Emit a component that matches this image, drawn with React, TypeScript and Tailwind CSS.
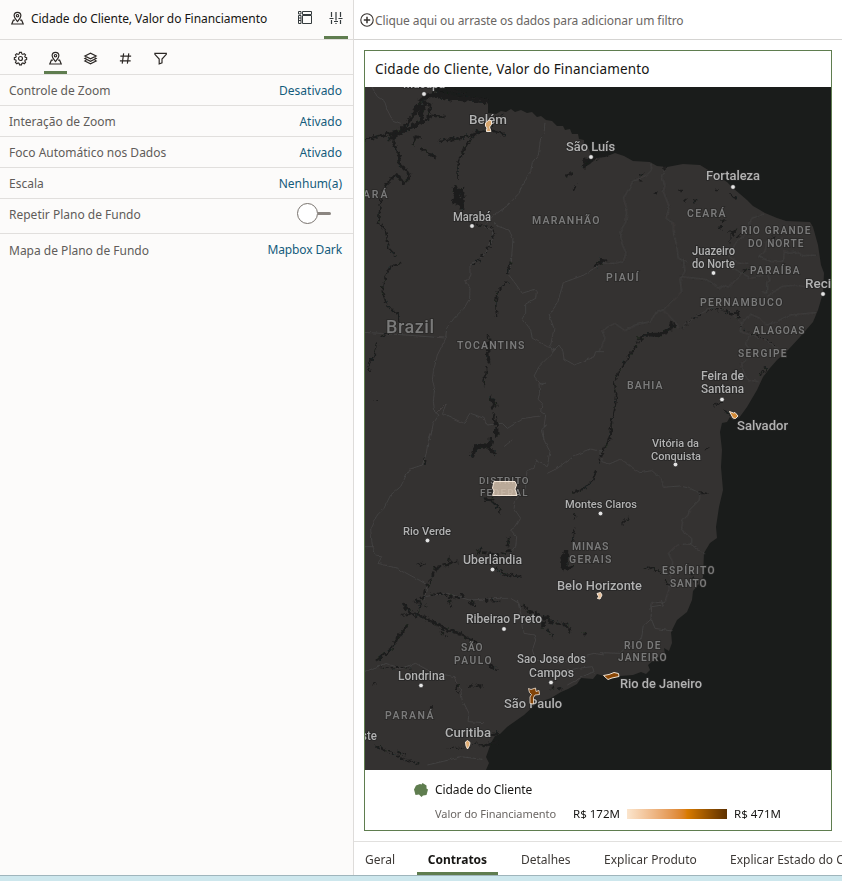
import type { ReactNode } from "react";

const PIN = (
  <>
    <path d="M8 11.2C6 8.6 4.4 7 4.4 5a3.6 3.6 0 0 1 7.2 0c0 2-1.6 3.6-3.6 6.2Z" />
    <circle cx="8" cy="5" r="1.3" />
    <path d="M5.200 9.800H3.600L1.900 13.900h12.200l-1.700-4.100h-1.600" />
  </>
);

function Icon({ children }: { children: ReactNode }) {
  return (
    <svg width="15" height="15" viewBox="0 0 16 16" fill="none" stroke="#2b2724" strokeWidth="1.25" className="block shrink-0">
      {children}
    </svg>
  );
}

const LAND =
  "M365 87H429L447 98 466 97 488 101V113L496 114 501 111 506 112 511 109 515 112 521 110 527 113 532 112 537 117 541 116 546 120 552 121 557 126 563 126 565 130 570 129 572 134 578 134 579 139 584 140 584 146 589 149 591 155 586 161 583 168 590 164 596 158 605 157 615 153 624 156 633 161 650 162 657 166 667 167 683 164 700 165 713 173 727 182 733 188 747 200 753 206 760 210 765 213 777 218 786 221 810 222 813 227 818 245 821 265 824 273 823 293 818 310 813 322 800 337 788 350 777 360 770 368 763 377 757 390 747 407 739 418 733 420 730 417 727 422 722 423 720 432 722 450 721 467 723 490 719 507 716 527 717 538 710 543 704 553 703 577 699 584 693 591 692 600 687 612 677 620 671 632 672 643 669 651 664 648 665 654 655 659 648 665 650 670 646 674 641 672 633 675 620 676 616 673 604 676 597 674 593 679 581 678 577 684 568 689 561 692 551 698 537 703 524 715 507 727 500 734 495 736 491 743 486 757 489 763 486 770H365Z";

// State boundaries, grouped by map section; section paths use a 3x local grid.
const BORDERS: { at: string; paths: string[] }[] = [
  { at: "translate(364 85) scale(.333333)", paths: [
    "M24 6L40 35 62 50 70 75 85 105 110 115",
    "M543 110L540 150 530 160 523 210 505 232 500 262 475 300 465 325 430 362 385 395 365 420",
    "M360 425L385 435 387 460 375 480 365 505 330 535",
    "M390 412L405 425 435 435 447 460 442 530",
  ] },
  { at: "translate(600 85) scale(.333333)", paths: [
    "M153 235L155 255 140 270 100 288 70 340 80 370 78 410 60 440 68 480 78 505 70 528 45 535 0 533",
    "M195 253L185 275 195 300 190 320 208 365 198 400 220 415 220 440 230 480 235 520 262 532",
    "M490 387L455 400 435 450 410 470 395 495 388 515 410 530 445 535",
    "M550 460L500 470 495 500 475 515 515 530 548 530 550 500 570 505 590 500 610 512 650 510",
  ] },
  { at: "translate(364 260) scale(.333333)", paths: [
    "M350 0L318 15 318 45 305 65 318 85 317 115 300 145 270 175 248 205 245 235 220 285 208 335 205 360 212 385 208 425 212 455 225 465 208 490 198 540",
    "M0 217L85 222 242 234",
    "M442 0L430 40 450 65 475 100 510 88 517 95 515 115 485 132 485 160 475 175 500 210 505 235 550 260 575 268 555 290 525 320 510 348 532 375 547 368 547 370 525 370 527 400 522 418 535 430 530 455 545 465 540 500 548 495 532 510 540 540",
    "M248 427L215 460M248 427L235 460 300 490 320 460 360 475 370 495 415 490 430 505 480 475 530 468",
    "M720 5L660 45 598 68 580 130 555 165 570 205 560 255 565 275 585 255 597 275 600 297 632 315 690 290 695 275 720 275",
  ] },
  { at: "translate(600 260) scale(.333333)", paths: [
    "M250 0L255 35 240 55 245 95 195 145 170 155 150 185 105 195 75 212 45 190 5 210 15 235 0 275",
    "M240 50L290 55 325 60 355 85 370 75 387 82 425 40 395 20",
    "M425 40L455 55 490 45M500 35L510 60 500 65 500 100 485 95M500 110L545 80 585 75 615 80 655 70",
    "M245 205L280 175 340 140 390 155 425 190 450 162 480 175 500 195 530 185 570 165 650 158",
    "M425 190L420 215 500 240 530 265 535 285",
    "M455 225L435 250 455 275M440 300L422 310 425 325 435 345 445 360 475 365",
    "M190 150L230 190 235 205",
  ] },
  { at: "translate(364 430) scale(.333333)", paths: [
    "M205 0L192 35 187 70 175 105 135 118 110 170 80 195 60 235 40 255 20 300 25 345 35 375 55 378 42 400 100 415 165 450 190 465 180 510",
    "M0 350H30M420 50L445 30",
    "M537 0L540 30 558 65 550 110 515 92 510 115 490 122 485 145 485 175 455 210 450 235 470 265 455 290 440 300 458 320 455 350 440 370",
    "M550 130L580 115 625 80 680 57 720 65",
    "M180 500L250 490 315 510 405 505 440 505 465 520 470 540",
  ] },
  { at: "translate(600 430) scale(.333333)", paths: [
    "M0 65L5 95 28 102 60 88 85 105 120 128 155 122 185 145 190 172 240 168 270 175 300 190 298 210 268 240 265 255 248 270 245 300 275 325 275 340 230 345 205 370 218 395 210 470 195 515 155 520 150 540",
    "M265 338L315 372",
  ] },
  { at: "translate(364 600) scale(.333333)", paths: [
    "M460 0L475 60 480 100 510 105 515 120 505 150 515 180 590 190 630 175 690 160 720 165",
    "M545 225L600 215 640 205 685 200 690 215 660 228 610 255",
    "M0 215L65 190 110 205 155 190 200 215 270 230 290 270 295 300 315 340 312 365 360 368",
    "M190 495L255 480 290 470 355 478",
  ] },
  { at: "translate(600 600) scale(.333333)", paths: [
    "M185 0L190 15 155 20 153 55 165 85 215 93",
    "M153 55L130 75 125 110 110 135 75 145 60 160 0 158",
  ] },
];

const RIVERS: { at: string; w: number; d: string; dash?: string }[] = [
  { at: "translate(364 85) scale(.333333)", w: 7, d: "M0 163L60 150 130 135 175 112 205 92 242 96M90 145L88 175 105 210 108 240 130 258 137 275 120 295 97 267 65 300M225 168L300 158 350 140 375 135 410 142 422 150M345 138L310 172 297 205 283 222" },
  { at: "translate(364 85) scale(.333333)", w: 4.5, d: "M65 300L50 345 43 410 65 440 75 490 100 515M283 222L282 285" },
  { at: "translate(364 85) scale(.333333)", w: 13, d: "M75 163L112 140 142 128 175 105M165 50L180 38 210 30 260 40 305 42 372 49M185 50L170 85 175 110M145 90L170 55M232 6L220 26 280 40" },
  { at: "translate(364 85) scale(.333333)", w: 8, d: "M110 135L130 115 150 90 175 60M188 50L198 60 190 105M245 8L305 30M660 250L665 225 700 220M605 275L625 262M630 315L636 302M147 180L155 155 170 158M170 190L215 218" },
  { at: "translate(364 85) scale(.333333)", w: 15, d: "M270 303L280 325 272 350 290 345 295 372M298 340L290 310" },
  { at: "translate(364 85) scale(.333333)", w: 4, dash: "10 7", d: "M295 372L310 400 325 415 350 425M345 418L390 430 385 465 365 505 330 530M380 125L395 95 420 88" },
  { at: "translate(364 260) scale(.333333)", w: 4.5, d: "M110 10L78 20 60 60 55 95 70 138 100 162 105 190M75 220L50 230M38 250L30 290 12 315 18 335M25 422H42M430 65L400 95 395 130 398 170M430 40L440 5M325 15L350 0M375 225L370 235M370 315L365 345 357 365 359 382" },
  { at: "translate(364 260) scale(.333333)", w: 8, d: "M375 235L372 270 375 310M378 412L395 435 382 445M388 460L398 500 400 530M378 530L378 540M690 18L715 5" },
  { at: "translate(600 260) scale(.333333)", w: 11, d: "M118 240L135 225 180 223 208 210 215 190 228 202" },
  { at: "translate(600 260) scale(.333333)", w: 9, dash: "12 4", d: "M375 150L395 165 415 155 418 175" },
  { at: "translate(600 260) scale(.333333)", w: 4.5, d: "M115 245L85 295 65 320 42 365 50 405 45 445 35 480 28 540M340 438L370 425M370 450L390 462M430 35L450 25M480 345L498 330 493 322" },
  { at: "translate(600 260) scale(.333333)", w: 3.5, dash: "8 7", d: "M245 205L280 175 340 148 375 150M420 195L430 210 470 225 530 260" },
  { at: "translate(364 430) scale(.333333)", w: 10, d: "M325 82L335 50 365 48 385 28 375 55 395 75M395 0V18M362 210L388 212M600 370L595 420M608 360L605 415 625 410" },
  { at: "translate(364 430) scale(.333333)", w: 5, d: "M385 215L405 235 410 253M385 408L425 435 475 440M340 365L355 352M158 402L185 405M628 190L660 175 690 145 697 120M435 320L430 350M630 250L635 265M632 295L625 335M610 365L590 385M180 85L183 105" },
  { at: "translate(364 430) scale(.333333)", w: 7, dash: "13 6", d: "M217 415L235 405 255 400 280 395M215 410L205 440 185 475 178 500 155 520M200 495L235 490 270 505 300 495M315 515L335 530M360 510L385 510 405 515M440 360L400 375 345 365 330 380M255 380L248 415M475 525L490 535M705 100L718 60" },
  { at: "translate(600 430) scale(.333333)", w: 5, d: "M35 0L22 40 8 60M135 418L155 410 180 430M195 455L210 465M272 440L295 465M65 282L88 262M298 190H320M315 55H325M275 430L282 435" },
  { at: "translate(364 600) scale(.333333)", w: 8, d: "M115 10L140 38 170 48 205 65 250 90 285 100 340 130M130 75L100 115 80 150 40 180" },
  { at: "translate(364 600) scale(.333333)", w: 9, dash: "17 6", d: "M475 15L500 35 530 45 560 65 605 75 620 92M375 195L400 210M312 258L360 258M280 250V275M555 45L530 85" },
  { at: "translate(364 600) scale(.333333)", w: 6, dash: "12 5", d: "M150 0L190 20M170 15L155 55M250 0L265 18M325 0L335 15M110 45L145 40M35 438L85 460 120 478 165 490M100 455L125 465M230 95L245 110M560 265L570 262M550 90L570 115M655 100L670 105M25 250H35M195 322H210M580 265L598 270" },
  { at: "translate(364 600) scale(.333333)", w: 4, dash: "9 6", d: "M245 445L305 445 330 432 360 435M50 205L100 202 145 205" },
  { at: "translate(364 600) scale(.333333)", w: 9, d: "M355 438L400 425M375 405L405 400" },
  { at: "translate(600 85) scale(.333333)", w: 7, d: "M118 270L130 268M118 286H128M165 322L175 325M238 318H246M250 345H260M283 345L287 350M345 312L352 318M392 330L410 342M355 430L368 425M385 440L405 438 395 450M365 408L375 402M190 250H200M515 455L525 460M0 525L25 528M0 210H30" },
  { at: "translate(600 85) scale(.333333)", w: 3.5, d: "M390 450L390 475M415 455L420 445" },
];

type Label = [string, number, number, number, number, number?, number?];
// text, left edge, baseline, width, font size, dot x, dot y
const CITIES: Label[] = [
  ["Macapá", 403, 88, 42, 13, 424, 94],
  ["Belém", 469, 124, 38, 13, 488, 130],
  ["São Luís", 566, 151, 49, 13, 591, 157],
  ["Fortaleza", 706, 180, 54, 13, 733, 187],
  ["Marabá", 453, 221, 38, 12, 472, 226],
  ["Juazeiro", 692, 255, 43, 12],
  ["do Norte", 692, 268, 43, 12, 713.5, 273],
  ["Recife", 805, 288, 38, 13, 823, 294],
  ["Feira de", 701, 380, 43, 12],
  ["Santana", 701, 393, 43, 12, 722, 399.5],
  ["Salvador", 737, 430, 51, 13],
  ["Vitória da", 652, 447, 47, 11.5],
  ["Conquista", 651, 460, 50, 11.5, 675.5, 464.5],
  ["Montes Claros", 565, 508, 72, 11.5, 600.5, 513.5],
  ["Rio Verde", 403, 535, 48, 11.5, 427.5, 540.5],
  ["Uberlândia", 463, 564, 59, 12, 492.5, 569.5],
  ["Belo Horizonte", 557, 590, 85, 13],
  ["Ribeirao Preto", 466, 623, 76, 12, 504, 629],
  ["Sao Jose dos", 517, 663, 69, 12],
  ["Campos", 529, 677, 45, 12, 551, 682.5],
  ["São Paulo", 504, 708, 58, 13],
  ["Rio de Janeiro", 620, 688, 82, 13],
  ["Londrina", 398, 680, 47, 12, 421, 685.5],
  ["Curitiba", 445, 737, 46, 13],
  ["Oeste", 347, 740, 30, 12],
];

const STATES: Label[] = [
  ["PARÁ", 355, 198, 34, 10.5],
  ["MARANHÃO", 532, 224, 69, 10.5],
  ["CEARÁ", 687, 217, 40, 10.5],
  ["RIO GRANDE", 741, 234, 71, 10.2],
  ["DO NORTE", 748, 247, 57, 10.2],
  ["PARAÍBA", 750, 274, 51, 10.2],
  ["PIAUÍ", 606, 281, 34, 10.5],
  ["PERNAMBUCO", 700, 306, 84, 10.5],
  ["ALAGOAS", 753, 334, 53, 10.2],
  ["SERGIPE", 738, 357, 50, 10.2],
  ["TOCANTINS", 457, 349, 69, 10.5],
  ["BAHIA", 627, 389, 37, 10.5],
  ["DISTRITO", 479, 484, 51, 9.8],
  ["FEDERAL", 480, 496, 49, 9.8],
  ["MINAS", 572, 550, 38, 10.5],
  ["GERAIS", 569, 563, 44, 10.5],
  ["ESPÍRITO", 662, 574, 54, 10.2],
  ["SANTO", 670, 587, 38, 10.2],
  ["SÃO", 461, 651, 23, 10.2],
  ["PAULO", 454, 664, 39, 10.2],
  ["RIO DE", 624, 649, 38, 10.2],
  ["JANEIRO", 618, 661, 50, 10.2],
  ["PARANÁ", 385, 719, 50, 10.5],
];

function CoastMap() {
  return (
    <svg viewBox="365 87 466 683" width="466" height="683" className="block bg-[#1a1c1b]" style={{ fontFamily: 'Roboto, "Liberation Sans", sans-serif' }}>
      <defs>
        <filter id="rough" x="365" y="87" width="466" height="683" filterUnits="userSpaceOnUse">
          <feTurbulence type="fractalNoise" baseFrequency="0.28" numOctaves="2" seed="4" />
          <feDisplacementMap in="SourceGraphic" scale="6" xChannelSelector="R" yChannelSelector="G" />
        </filter>
        <filter id="wobble" x="365" y="87" width="466" height="683" filterUnits="userSpaceOnUse">
          <feTurbulence type="fractalNoise" baseFrequency="0.15" numOctaves="2" seed="9" />
          <feDisplacementMap in="SourceGraphic" scale="3" xChannelSelector="R" yChannelSelector="G" />
        </filter>
      </defs>
      <path d={LAND} fill="#343231" />
      <g fill="none" stroke="#424141" strokeWidth="3" strokeLinejoin="round" filter="url(#wobble)">
        {BORDERS.map((b, i) => (
          <path key={i} transform={b.at} d={b.paths.join("")} />
        ))}
      </g>
      <g fill="none" stroke="#1b1d1c" filter="url(#rough)">
        {RIVERS.map((r, i) => (
          <path key={i} transform={r.at} d={r.d} strokeWidth={r.w} strokeDasharray={r.dash} />
        ))}
      </g>
      <g fill="#7a7a7a" stroke="#292827" strokeWidth="1.6" paintOrder="stroke" fontWeight="600">
        {STATES.map(([t, x, y, w, s]) => (
          <text key={t + y} x={x} y={y} fontSize={s} letterSpacing="1.5" textLength={w}>{t}</text>
        ))}
        <text x="386" y="333" fontSize="18" textLength="48" fontWeight="500">Brazil</text>
      </g>
      <g fill="#b2b2b2" stroke="#252525" strokeWidth="1.5" paintOrder="stroke" fontWeight="500">
        {CITIES.map(([t, x, y, w, s]) => (
          <text key={t + y} x={x} y={y} fontSize={s} textLength={w} lengthAdjust="spacingAndGlyphs">{t}</text>
        ))}
      </g>
      {CITIES.filter((c) => c[6]).map((c) => (
        <circle key={c[0]} cx={c[5]} cy={c[6]} r="2.3" fill="#e5e5e5" stroke="#252525" strokeWidth=".6" />
      ))}
      <g stroke="#f2e5d7" strokeWidth="1">
        <path d="M494 481.500H515L516.500 485 515 489 517 495.500H492.500L494 491 492.500 488Z" fill="#d2bfab" fillOpacity=".85" />
        <path d="M485.500 123L489 120 491.500 121 491.500 124.500 489.500 127 491 131.500H486.500L487 128 485.500 126Z" fill="#d6a56d" />
        <path d="M729.500 411.500L733.500 413 735 412.500 738 416 735.500 418.500 733 418Z" fill="#d48934" />
        <path d="M597 593.500L600.500 592.500 602 595 600 599 597.500 598.500 598.500 596.500Z" fill="#e7c09a" />
        <path d="M603.500 675.500L609 674.500 614 672.500 618.500 673.500 619 676.500 612 678 608 679.500Z" fill="#8b4705" />
        <path d="M528.500 688.500L531 689.500 535.500 688 536 691.500 539 690.500 539.500 694.500 535 695 533.500 697.500 533.500 704 530 703.500 530 697 531.500 694.500 529.500 692.500Z" fill="#814307" strokeWidth=".8" />
        <path d="M465.500 742L467.500 740.500 470 742.500 469.500 745.500 467.500 749 466 746Z" fill="#e1ad72" />
      </g>
    </svg>
  );
}

const ROWS = [
  ["Controle de Zoom", "Desativado"],
  ["Interação de Zoom", "Ativado"],
  ["Foco Automático nos Dados", "Ativado"],
  ["Escala", "Nenhum(a)"],
];

function SidePanel() {
  return (
    <aside className="flex w-[354px] shrink-0 flex-col border-r border-[#dedcda] bg-[#fcfbfa]">
      <header className="flex h-10 items-center border-b border-[#dedcda] pl-[9.500px]">
        <div className="mb-0.5"><Icon>{PIN}</Icon></div>
        <h1 className="mb-0.5 ml-[6.500px] w-[260px] whitespace-nowrap text-[12px] leading-5 tracking-[-0.06px] text-[#161513]">Cidade do Cliente, Valor do Financiamento</h1>
        <div className="mb-1 ml-[6.500px]">
          <svg width="14" height="13" viewBox="0 0 14 13" fill="none" stroke="#343b3d" className="block">
            <path d="M.5.5h2.500v2.500H.5ZM4.500 .5h9V3.500h-9ZM.5 4.500h2.500v8H.5ZM4.500 4.500h9v8h-9ZM.5 7h2.500M.5 9.500h2.500" />
          </svg>
        </div>
        <div className="ml-3 flex h-full w-6 flex-col items-center justify-between">
          <svg width="14" height="14" viewBox="0 0 14 14" fill="none" stroke="#343b3d" strokeWidth="1.200" className="mt-[11px] block">
            <path d="M2.500 1v5M2.500 9v4M.5 7.500h4M7 1v8.500M7 12v1M5 10.500h4M11.500 1v5M11.500 9V13M9.500 7.500h4" />
          </svg>
          <span className="h-[3px] w-6 bg-[#5f7d4f]" />
        </div>
      </header>
      <nav className="flex h-[35px] border-b border-[#e1dfdd] pl-[9px]">
        <span className="flex w-[35px] items-center pt-[3px] pl-1">
          <Icon>
            <path d="M6.900 1.700h2.200l.4 1.700 1.200.5 1.500-.9 1.500 1.500-.9 1.500.5 1.200 1.600.4v2.200l-1.600.4-.5 1.200.9 1.500-1.500 1.500-1.500-.9-1.200.5-.4 1.700H6.900l-.4-1.700-1.200-.5-1.500.9-1.500-1.500.9-1.500-.5-1.200-1.600-.4V7.600l1.600-.4.5-1.200-.9-1.500L3.800 3l1.500.9 1.200-.5Z" transform="translate(.4 -.1) scale(.95)" />
            <circle cx="8" cy="8" r="2.100" />
          </Icon>
        </span>
        <span className="flex w-[23px] flex-col items-center justify-between pt-[11px]">
          <Icon>{PIN}</Icon>
          <span className="h-[3px] w-[23px] bg-[#5f7d4f]" />
        </span>
        <span className="ml-4 flex items-center pt-[3px]">
          <Icon><path d="M2 5.300L8 2.300l6 3-6 3ZM3.500 7.200L2 8l6 3 6-3-1.500-.8M3.500 9.900L2 10.700l6 3 6-3-1.500-.8" /></Icon>
        </span>
        <span className="ml-5 flex items-center pt-[3px]">
          <Icon><path d="M6 2.500L4.500 13.500M11.500 2.500L10 13.500M2.500 5.500h11.500M2 10.500h11.500" /></Icon>
        </span>
        <span className="ml-5 flex items-center pt-[2px]">
          <Icon><path d="M2 2.500h12.200v1L9.600 8.600v4l-3 1.200V8.600L2 3.500Z" /></Icon>
        </span>
      </nav>
      <div className="text-[12px] text-[#605c59]">
        {ROWS.map(([name, value]) => (
          <div key={name} className="flex h-[31px] items-center justify-between border-b border-[#e1dfdd] pt-0.5 pr-[11px] pl-[9px]">
            <span>{name}</span>
            <span className="text-[#145c7c]">{value}</span>
          </div>
        ))}
        <div className="flex h-[35px] items-start justify-between border-b border-[#e1dfdd] pr-[22px] pl-[9px]">
          <span className="mt-[7px]">Repetir Plano de Fundo</span>
          <span className="mt-[4px] flex items-center">
            <span className="size-[21px] rounded-full border border-[#79736e] bg-white" />
            <span className="h-[3px] w-[13px] rounded-r bg-[#8b8580]" />
          </span>
        </div>
        <div className="flex h-[31px] items-center justify-between pr-[11px] pl-[9px]">
          <span className="pt-0.5">Mapa de Plano de Fundo</span>
          <span className="tracking-[-0.1px] text-[#145c7c]">Mapbox Dark</span>
        </div>
      </div>
    </aside>
  );
}

export default function App() {
  return (
    <div className="flex h-[881px] w-[842px] flex-col overflow-hidden bg-white font-['Noto_Sans','Open_Sans',sans-serif]">
      <div className="flex h-[875px] shrink-0">
        <SidePanel />
        <main className="flex w-[488px] flex-col overflow-hidden">
          <div className="flex h-10 shrink-0 items-center border-b border-[#d5d4d2] pl-1.5 text-[12px] tracking-[-0.09px] text-[#6a6663]">
            <svg width="14" height="14" viewBox="0 0 14 14" fill="none" stroke="#36322f" strokeWidth="1.100" className="mr-px block">
              <circle cx="7" cy="7" r="6.200" />
              <path d="M7 3.800v6.400M3.800 7h6.400" strokeWidth="1.500" />
            </svg>
            <span className="mt-0.5 whitespace-nowrap">Clique aqui ou arraste os dados para adicionar um filtro</span>
          </div>
          <section className="mt-2.5 ml-2.5 flex h-[781px] w-[468px] shrink-0 flex-col border border-[#5f7d4f]">
            <h2 className="flex h-9 shrink-0 items-center pl-2.5 text-[13.500px] tracking-[0.15px] text-[#161513]">Cidade do Cliente, Valor do Financiamento</h2>
            <CoastMap />
            <div className="flex flex-col pl-[49px]">
              <div className="mt-2.5 flex h-5 items-center text-[12px] tracking-[-0.1px] text-[#161513]">
                <svg width="14" height="14" viewBox="0 0 14 14" className="mr-[7px] block">
                  <path d="M2 2.500L6 1l1.500.5L8.500 0l4 2.500v3l1.500 1-1.500 5.500-3.500.5L7.500 14 5 11.500l-3.500.5L0 6.500Z" fill="#5f7d4f" />
                </svg>
                Cidade do Cliente
              </div>
              <div className="mt-1 flex h-5 items-center pl-[21px] text-[11.500px] text-[#161513]">
                <span className="w-[138px] text-[11px] tracking-[-0.05px] text-[#6a6663]">Valor do Financiamento</span>
                <span className="w-[54px]">R$ 172M</span>
                <span className="h-2.5 w-[100px] bg-linear-to-r from-[#fbe5cd] via-[#d97b00] via-60% to-[#5e3100]" />
                <span className="ml-[7px]">R$ 471M</span>
              </div>
            </div>
          </section>
          <nav className="mt-2.5 flex h-[34px] shrink-0 border-t border-[#e1e0de] whitespace-nowrap text-[12px] text-[#3d3936]">
            <span className="w-[63px] shrink-0 pt-2.5 pl-[11px] leading-4">Geral</span>
            <span className="flex w-[81px] shrink-0 flex-col items-center justify-between pt-2.5 leading-4 font-bold text-[#161513]">
              Contratos
              <span className="h-[3px] w-full bg-[#5f7d4f]" />
            </span>
            <span className="w-[83px] shrink-0 pt-2.5 pl-[23px] leading-4">Detalhes</span>
            <span className="w-[126px] shrink-0 pt-2.5 pl-[23px] leading-4">Explicar Produto</span>
            <span className="shrink-0 pt-2.5 pl-[23px] leading-4">Explicar Estado do Cliente</span>
          </nav>
        </main>
      </div>
      <footer className="h-1.5 shrink-0 border-t border-[#9fb5bc] bg-[#cde7ed]" />
    </div>
  );
}
